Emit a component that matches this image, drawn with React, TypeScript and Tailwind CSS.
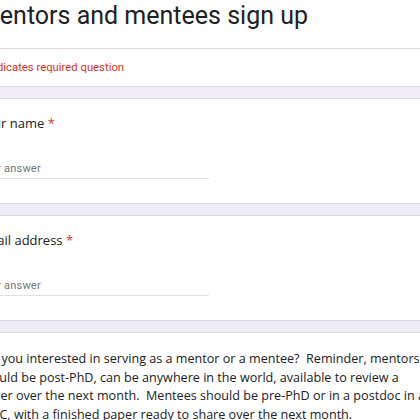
import type { ReactNode } from "react";

const Card = ({ children }: { children: ReactNode }) => (
  <div className="bg-white border border-[#dadce0] rounded-lg">{children}</div>
);

const TextQuestion = ({ label }: { label: string }) => (
  <Card>
    <div className="px-[19px] pt-[15px] pb-[24px]">
      <p className="text-[13px] leading-[19px] text-[#202124] font-['Open_Sans',sans-serif]">
        {label}
        <span className="text-[#d93025]"> *</span>
      </p>
      <div className="w-[231px] mt-[21px] border-b border-[#e0e0e0]">
        <span className="text-[11px] leading-[14px] text-[#70757a] font-['Roboto',sans-serif] tracking-[0.2px]">
          Your answer
        </span>
      </div>
    </div>
  </Card>
);

export default function App() {
  return (
    <div className="min-h-screen bg-[#f0ebf8] overflow-hidden">
      <div className="-ml-[42px] -mt-[20px] w-[502px] flex flex-col gap-[11px]">
        <Card>
          <div className="px-[19px] pt-[18px] pb-[15px] border-b border-[#dadce0]">
            <h1 className="text-[25px] leading-[34px] text-[#202124] font-['Roboto',sans-serif]">
              Mentors and mentees sign up
            </h1>
          </div>
          <div className="pl-[21px] pr-[19px] py-[11px]">
            <p className="text-[11.3px] leading-[15px] text-[#d93025] font-['Roboto',sans-serif]">
              * Indicates required question
            </p>
          </div>
        </Card>

        <TextQuestion label="Your name" />
        <TextQuestion label="Email address" />

        <Card>
          <div className="px-[19px] pt-[17px] pb-[25px]">
            <p className="w-[455px] text-[12.6px] leading-[18.5px] text-[#202124] font-['Open_Sans',sans-serif] whitespace-pre-wrap">
              {"Are you interested in serving as a mentor or a mentee?  Reminder, mentors should be post-PhD, can be anywhere in the world, available to review a paper over the next month.  Mentees should be pre-PhD or in a postdoc in an LMIC, with a finished paper ready to share over the next month."}
            </p>
          </div>
        </Card>
      </div>
    </div>
  );
}
